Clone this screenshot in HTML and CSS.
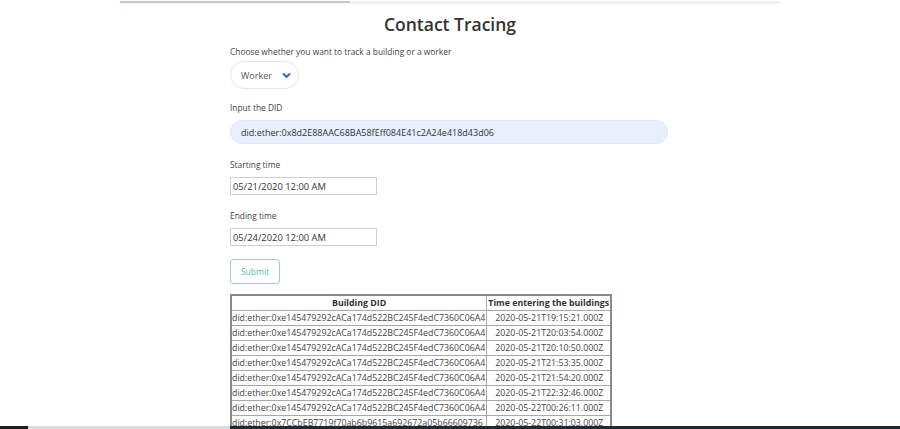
FILE: index.html
```
<!DOCTYPE html>
<html>
    <head>
        <meta charset="utf-8">
        <meta name="viewport" content="width=device-width, initial-scale=1">
        <link rel="stylesheet" href="styles.css">
    </head>
    <body>
        <div class="barraProgreso"><span></span></div>
        <main class="contenedor">
            <h1>Contact Tracing</h1>

            <label class="etiqueta">Choose whether you want to track a building or a worker</label>
            <div class="selector">
                <span>Worker</span>
                <svg width="9" height="7" viewBox="0 0 9 7">
                    <polyline points="1.5,2 4.5,5 7.5,2"></polyline>
                </svg>
            </div>

            <label class="etiqueta separado">Input the DID</label>
            <input class="campoDid" type="text" value="did:ether:0x8d2E88AAC68BA58fEff084E41c2A24e418d43d06" readonly>

            <label class="etiqueta separadoGrande">Starting time</label>
            <input class="campoFecha" type="text" value="05/21/2020 12:00 AM" readonly>

            <label class="etiqueta separadoGrande">Ending time</label>
            <input class="campoFecha" type="text" value="05/24/2020 12:00 AM" readonly>

            <button class="botonEnviar">Submit</button>

            <table class="tablaResultados">
                <thead>
                    <tr><th>Building DID</th><th>Time entering the buildings</th></tr>
                </thead>
                <tbody>
                    <tr><td>did:ether:0xe145479292cACa174d522BC245F4edC7360C06A4</td><td>2020-05-21T19:15:21.000Z</td></tr>
                    <tr><td>did:ether:0xe145479292cACa174d522BC245F4edC7360C06A4</td><td>2020-05-21T20:03:54.000Z</td></tr>
                    <tr><td>did:ether:0xe145479292cACa174d522BC245F4edC7360C06A4</td><td>2020-05-21T20:10:50.000Z</td></tr>
                    <tr><td>did:ether:0xe145479292cACa174d522BC245F4edC7360C06A4</td><td>2020-05-21T21:53:35.000Z</td></tr>
                    <tr><td>did:ether:0xe145479292cACa174d522BC245F4edC7360C06A4</td><td>2020-05-21T21:54:20.000Z</td></tr>
                    <tr><td>did:ether:0xe145479292cACa174d522BC245F4edC7360C06A4</td><td>2020-05-21T22:32:46.000Z</td></tr>
                    <tr><td>did:ether:0xe145479292cACa174d522BC245F4edC7360C06A4</td><td>2020-05-22T00:26:11.000Z</td></tr>
                    <tr><td>did:ether:0x7CCbEB7719f70ab6b9615a692672a05b66609736</td><td>2020-05-22T00:31:03.000Z</td></tr>
                </tbody>
            </table>
        </main>
        <div class="barraTareas">
            <span class="inicio"></span>
            <span class="busqueda"></span>
            <span class="resto"></span>
        </div>
    </body>
</html>
```

FILE: styles.css
```
html,
body {
    height : 100%;
    margin : 0;
    padding: 0;
}

body {
    background-color: #fff;
    color           : #444;
    font-family     : "Open Sans", "Noto Sans", sans-serif;
    overflow        : hidden;
}

/* linea de carga de arriba */
.barraProgreso {
    background-color: #f0f0f0;
    box-shadow      : 0 1px 2px rgba(0, 0, 0, 0.06);
    height          : 2px;
    margin          : 1px auto 0;
    width           : 660px;
}

.barraProgreso > span {
    background-color: #b9c9cc;
    display         : block;
    height          : 100%;
    width           : 230px;
}

.contenedor {
    display       : flex;
    flex-direction: column;
    margin        : 0 auto;
    width         : 440px;
}

.contenedor > h1 {
    color      : #333;
    font-size  : 17.5px;
    font-weight: 600;
    line-height: 26px;
    margin     : 8px 0 0;
    text-align : center;
}

.etiqueta {
    color      : #444;
    font-size  : 8.4px;
    line-height: 14px;
    margin-top : 8px;
}

.etiqueta.separado {
    margin-top: 12px;
}

.etiqueta.separadoGrande {
    margin-top: 14px;
}

.selector {
    align-items  : center;
    border       : 1px solid #e6e6e6;
    border-radius: 14px;
    box-sizing   : border-box;
    color        : #555;
    display      : flex;
    font-size    : 9px;
    gap          : 10px;
    height       : 28px;
    margin-top   : 2px;
    padding      : 0 10px 0 10px;
    width        : 69px;
}

.selector svg {
    fill           : none;
    flex           : 0 0 auto;
    stroke         : #3d6cb9;
    stroke-linecap : round;
    stroke-linejoin: round;
    stroke-width   : 2;
}

.campoDid {
    background-color: #e8f0fe;
    border          : 1px solid #e2e9f3;
    border-radius   : 12px;
    box-sizing      : border-box;
    color           : #333;
    font-family     : inherit;
    font-size       : 9px;
    height          : 24px;
    margin-top      : 5px;
    outline         : none;
    padding         : 0 10px;
    width           : 438px;
}

.campoFecha {
    border     : 1px solid #cfcfcf;
    box-sizing : border-box;
    color      : #333;
    font-family: inherit;
    font-size  : 9.4px;
    height     : 18px;
    margin-top : 5px;
    outline    : none;
    padding    : 0 2px;
    width      : 147px;
}

.botonEnviar {
    align-self      : flex-start;
    background-color: #fff;
    border          : 1px solid #8fd6cf;
    border-radius   : 3px;
    color           : #4dbbb1;
    font-family     : inherit;
    font-size       : 8.5px;
    height          : 25px;
    margin-top      : 13px;
    padding         : 0 9px;
    width           : 50px;
}

/* tabla de resultados */
.tablaResultados {
    align-self     : flex-start;
    border         : 2px solid #8a8a8a;
    border-collapse: collapse;
    color          : #444;
    font-size      : 8.8px;
    margin-top     : 10px;
}

.tablaResultados th,
.tablaResultados td {
    border     : 1px solid #a8a8a8;
    height     : 14px;
    line-height: 13px;
    padding    : 0 1px;
    white-space: nowrap;
}

.tablaResultados th {
    color      : #333;
    font-weight: 700;
}

.tablaResultados td:first-child {
    padding-left: 0;
}

.tablaResultados td:last-child {
    padding: 0 5px 0 8px;
}

/* barra de tareas de abajo */
.barraTareas {
    bottom  : 0;
    display : flex;
    height  : 3px;
    left    : 0;
    position: fixed;
    width   : 100%;
}

.barraTareas > .inicio {
    background-color: #1c1c1c;
    width           : 28px;
}

.barraTareas > .busqueda {
    background-color: #dcdcdc;
    width           : 202px;
}

.barraTareas > .resto {
    background-color: #1f2a33;
    flex            : 1 0 auto;
}
```
